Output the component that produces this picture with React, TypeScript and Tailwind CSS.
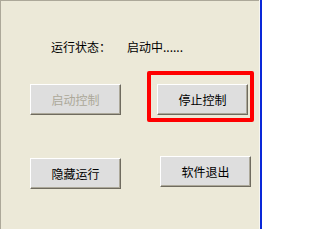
import React from 'react'

const font = { fontFamily: '"Noto Sans CJK SC", "Liberation Sans", sans-serif' }

type BtnProps = { label: string; disabled?: boolean; className?: string }

const WinButton = ({ label, disabled, className = '' }: BtnProps) => (
    <button
        disabled={disabled}
        className={`w-[91px] h-[31px] shrink-0 bg-[#dedede] border border-t-white border-l-white border-r-[#6f6b5f] border-b-[#6f6b5f] shadow-[inset_-1px_-1px_0_#aca899] text-[12px] leading-[12px] flex items-center justify-center ${disabled ? 'text-[#aca899]' : 'text-black'} ${className}`}
    >
        {label}
    </button>
)

export default function App() {
    return (
        <div className="w-[262px] h-[229px] flex bg-[#ece9d8] overflow-hidden" style={font}>
            {/* panel */}
            <div className="w-[259px] h-full border-t border-l border-[#aca899]">
                <div className="mt-[40px] pl-[50px] flex h-[12px] text-[12px] leading-[12px] text-black">
                    <span className="w-[76px]">运行状态：</span>
                    <span>启动中......</span>
                </div>

                <div className="mt-[18px] pl-[29px] flex items-start gap-[26px]">
                    <WinButton label="启动控制" disabled className="mt-[13px]" />
                    {/* highlight box */}
                    <div className="w-[107px] h-[51px] border-[4px] border-[#ff0000] rounded-[2px] pl-[6px] pt-[9px]">
                        <WinButton label="停止控制" />
                    </div>
                </div>

                <div className="mt-[34px] pl-[29px] flex items-start gap-[39px]">
                    <WinButton label="隐藏运行" className="mt-[2px]" />
                    <WinButton label="软件退出" />
                </div>
            </div>
            <div className="w-[1px] h-full bg-[#f7f6f0]" />
            <div className="w-[2px] h-full bg-[#0a28d8]" />
        </div>
    )
}
